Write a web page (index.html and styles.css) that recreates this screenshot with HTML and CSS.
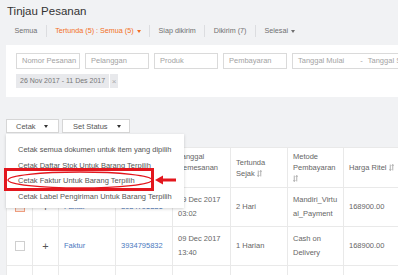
FILE: index.html
```html
<!DOCTYPE html>
<html>
<head>
<meta charset="utf-8">
<link rel="stylesheet" href="styles.css">
</head>
<body>
<div class="page">
  <h1 class="title">Tinjau Pesanan</h1>
  <nav class="tabs">
    <span class="tab">Semua</span>
    <span class="tab active">Tertunda (5) : Semua (5) <span class="caret"></span></span>
    <span class="tab">Siap dikirim</span>
    <span class="tab">Dikirim (7)</span>
    <span class="tab">Selesai <span class="caret"></span></span>
  </nav>
  <section class="filters">
    <div class="inputs">
      <div class="field">Nomor Pesanan</div>
      <div class="field">Pelanggan</div>
      <div class="field">Produk</div>
      <div class="field">Pembayaran</div>
      <div class="field date"><span>Tanggal Mulai</span><span class="dash">-</span><span>Tanggal Selesai</span></div>
    </div>
    <div class="chip"><span class="chip-text">26 Nov 2017 - 11 Des 2017</span><span class="chip-x">×</span></div>
  </section>
  <div class="toolbar">
    <div class="btn btn-cetak"><span>Cetak</span><span class="caret dark"></span></div>
    <div class="btn btn-status"><span>Set Status</span><span class="caret dark"></span></div>
    <ul class="menu">
      <li>Cetak semua dokumen untuk item yang dipilih</li>
      <li>Cetak Daftar Stok Untuk Barang Terpilih</li>
      <li>Cetak Faktur Untuk Barang Terpilih</li>
      <li>Cetak Label Pengiriman Untuk Barang Terpilih</li>
    </ul>
  </div>
  <table class="orders">
    <colgroup>
      <col class="c-check"><col class="c-plus"><col class="c-doc"><col class="c-no"><col class="c-date"><col class="c-pend"><col class="c-pay"><col class="c-price">
    </colgroup>
    <thead>
      <tr>
        <th></th><th></th><th></th><th></th>
        <th>Tanggal<br>Pemesanan<br><svg class="sort" viewBox="0 0 6 8" width="5" height="7"><path d="M1.5 0.5v7M0.3 6.2l1.2 1.3 1.2-1.3M4.5 7.5v-7M3.3 1.8l1.2-1.3 1.2 1.3" fill="none" stroke="#888" stroke-width="0.8"/></svg></th>
        <th>Tertunda<br>Sejak <svg class="sort" viewBox="0 0 6 8" width="5" height="7"><path d="M1.5 0.5v7M0.3 6.2l1.2 1.3 1.2-1.3M4.5 7.5v-7M3.3 1.8l1.2-1.3 1.2 1.3" fill="none" stroke="#888" stroke-width="0.8"/></svg></th>
        <th>Metode<br>Pembayaran<br><svg class="sort" viewBox="0 0 6 8" width="5" height="7"><path d="M1.5 0.5v7M0.3 6.2l1.2 1.3 1.2-1.3M4.5 7.5v-7M3.3 1.8l1.2-1.3 1.2 1.3" fill="none" stroke="#888" stroke-width="0.8"/></svg></th>
        <th>Harga Ritel <svg class="sort" viewBox="0 0 6 8" width="5" height="7"><path d="M1.5 0.5v7M0.3 6.2l1.2 1.3 1.2-1.3M4.5 7.5v-7M3.3 1.8l1.2-1.3 1.2 1.3" fill="none" stroke="#888" stroke-width="0.8"/></svg></th>
      </tr>
    </thead>
    <tbody>
      <tr>
        <td><span class="check checked"></span></td>
        <td class="plus">+</td>
        <td class="link">Faktur</td>
        <td class="link">3934795831</td>
        <td>09 Dec 2017<br>03:02</td>
        <td>2 Hari</td>
        <td>Mandiri_Virtu<br>al_Payment</td>
        <td>168900.00</td>
      </tr>
      <tr>
        <td><span class="check"></span></td>
        <td class="plus">+</td>
        <td class="link">Faktur</td>
        <td class="link">3934795832</td>
        <td>09 Dec 2017<br>13:40</td>
        <td>1 Harian</td>
        <td>Cash on<br>Delivery</td>
        <td>168900.00</td>
      </tr>
      <tr class="last">
        <td></td><td></td><td></td><td></td><td></td><td></td><td></td><td></td>
      </tr>
    </tbody>
  </table>
  <svg class="annot" width="398" height="275" viewBox="0 0 398 275">
    <rect x="5.5" y="169.5" width="147" height="20" fill="none" stroke="#e3161d" stroke-width="3"/>
    <ellipse cx="80" cy="180" rx="72" ry="8" fill="none" stroke="#e3161d" stroke-width="1.4"/>
    <line x1="176" y1="180" x2="161" y2="180" stroke="#e3161d" stroke-width="3"/>
    <polygon points="155,180 163,175.5 163,184.5" fill="#e3161d"/>
  </svg>
</div>
</body>
</html>
```

FILE: styles.css
```css
body {
  margin: 0;
  background: #f1f2f4;
  font-family: "Liberation Sans", Arial, sans-serif;
  color: #666;
}

.page {
  position: relative;
  width: 398px;
  height: 275px;
  overflow: hidden;
}

.title {
  margin: 0;
  padding: 4px 0 0 7px;
  font-size: 11.5px;
  font-weight: normal;
  line-height: 14px;
  color: #333;
}

.tabs {
  display: flex;
  align-items: center;
  margin-top: 6px;
  padding-left: 6px;
  height: 14px;
}

.tab {
  display: flex;
  align-items: center;
  gap: 3px;
  padding: 0 8.5px;
  font-size: 7.2px;
  line-height: 12px;
  color: #707070;
  border-left: 1px solid #dcdde0;
  white-space: nowrap;
}

.tab:first-child {
  border-left: none;
}

.tab.active {
  color: #f36f23;
}

.caret {
  display: inline-block;
  width: 0;
  height: 0;
  border-left: 2.5px solid transparent;
  border-right: 2.5px solid transparent;
  border-top: 3px solid currentColor;
}

.caret.dark {
  color: #333;
}

.filters {
  margin: 7px 0 0 6px;
  padding: 8px 10px 9px;
  background: #fff;
}

.inputs {
  display: flex;
  gap: 5px;
}

.field {
  flex: none;
  box-sizing: border-box;
  width: 64px;
  height: 16px;
  padding: 0 5px;
  border: 1px solid #dadada;
  font-size: 7.5px;
  line-height: 14px;
  color: #a3a3a3;
  white-space: nowrap;
  overflow: hidden;
}

.field.date {
  width: 200px;
  display: flex;
  gap: 0;
}

.field.date .dash {
  margin: 0 5px 0 16px;
}

.chip {
  display: inline-flex;
  align-items: center;
  box-sizing: border-box;
  margin-top: 5px;
  height: 14px;
  width: 102px;
  background: #e8e9ec;
  font-size: 7px;
  color: #777;
}

.chip-text {
  padding: 0 4px;
  border-right: 1px solid #fff;
  line-height: 14px;
  white-space: nowrap;
}

.chip-x {
  flex: 1;
  text-align: center;
  color: #aaa;
  font-size: 8px;
}

.toolbar {
  position: relative;
  display: flex;
  gap: 3px;
  margin: 22px 0 0 6px;
}

.btn {
  display: flex;
  align-items: center;
  justify-content: space-between;
  box-sizing: border-box;
  height: 14px;
  border: 1px solid #d6d6d6;
  background: #fff;
  font-size: 7.5px;
  color: #555;
}

.btn-cetak {
  width: 53px;
  padding: 0 10px 0 9px;
}

.btn-status {
  width: 68px;
  padding: 0 8px 0 10px;
}

.menu {
  position: absolute;
  top: 15px;
  left: 0;
  z-index: 2;
  width: 178px;
  margin: 0;
  padding: 8px 0 4px;
  list-style: none;
  background: #fff;
  box-shadow: 0 1px 3px rgba(0, 0, 0, 0.18);
}

.menu li {
  padding-left: 12px;
  font-size: 7.5px;
  line-height: 15.5px;
  color: #555;
  white-space: nowrap;
}

.orders {
  margin: 14px 0 0 6px;
  width: 420px;
  table-layout: fixed;
  border-collapse: collapse;
  background: #fff;
  font-size: 7.5px;
  color: #666;
}

.c-check { width: 26px; }
.c-plus { width: 26px; }
.c-doc { width: 57px; }
.c-no { width: 57px; }
.c-date { width: 58px; }
.c-pend { width: 57px; }
.c-pay { width: 56px; }
.c-price { width: 83px; }

.orders th {
  height: 39px;
  padding: 0 5px;
  border: 1px solid #e9e9e9;
  font-weight: normal;
  text-align: left;
  vertical-align: middle;
  line-height: 11px;
  color: #666;
}

.orders td {
  height: 38px;
  padding: 0 5px;
  border: 1px solid #e9e9e9;
  line-height: 14px;
  vertical-align: middle;
  white-space: nowrap;
}

.orders tr.last td {
  height: 20px;
}

.sort {
  vertical-align: -1px;
}

.check {
  display: block;
  box-sizing: border-box;
  width: 10px;
  height: 10px;
  margin-left: 3px;
  border: 1px solid #cfcfcf;
  background: #fff;
}

.check.checked {
  border-color: #f0a080;
  background: #fbe9e2;
}

.plus {
  font-size: 11px;
  color: #555;
  text-align: center;
}

.link {
  color: #4a79c0;
}

.annot {
  position: absolute;
  top: 0;
  left: 0;
  z-index: 5;
  pointer-events: none;
}
```
